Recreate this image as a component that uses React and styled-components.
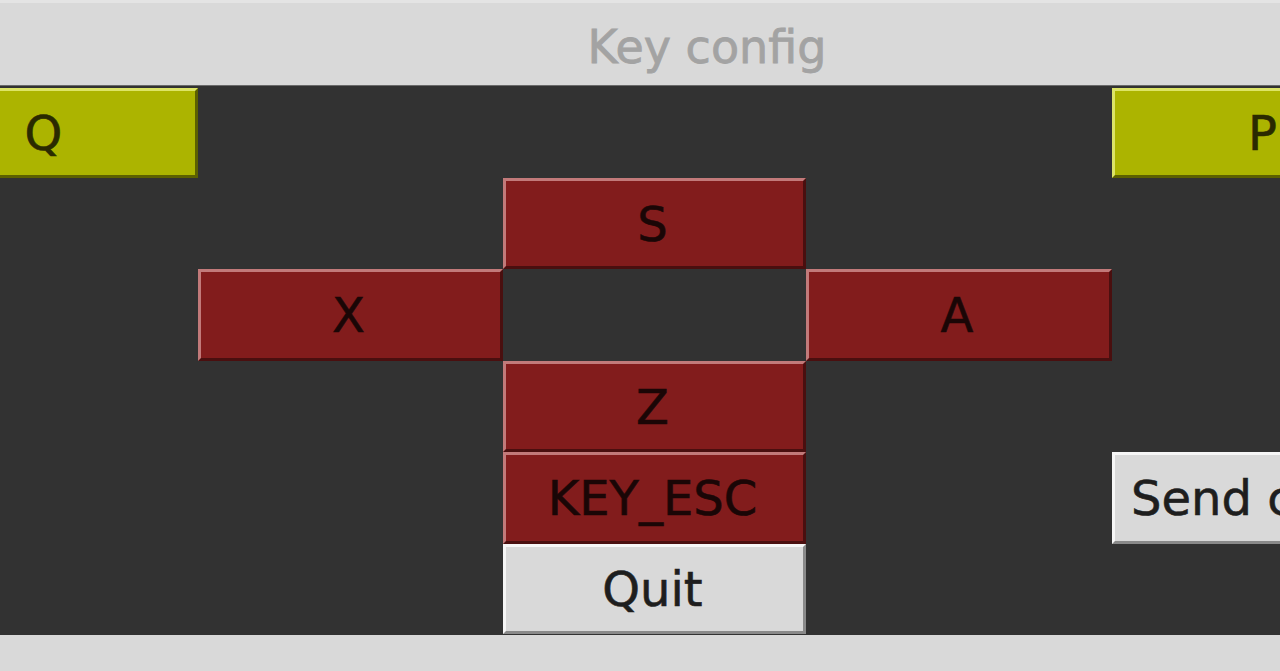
import React from "react";
import styled, { createGlobalStyle } from "styled-components";

const Global = createGlobalStyle`
	html, body {
		margin: 0;
		padding: 0;
		background: #d9d9d9;
		overflow: hidden;
	}
`;

const Window = styled.div`
	width: 1280px;
	height: 671px;
	display: flex;
	flex-direction: column;
	background: #d9d9d9;
	overflow: hidden;
	font-family: "DejaVu Sans", "Liberation Sans", sans-serif;
`;

const TitleBar = styled.div`
	height: 85px;
	display: flex;
	align-items: center;
	justify-content: center;
	padding: 6px 0 0 134px;
	box-sizing: border-box;
	color: #a3a3a3;
	font-size: 46px;
	-webkit-text-stroke: 0.8px #a3a3a3;
	border-top: 3px solid #e4e4e4;
`;

const Board = styled.div`
	height: 550px;
	background: #323232;
	border-top: 1px solid #6a6a6a;
	box-sizing: border-box;
	overflow: hidden;
`;

/* the window is cropped: the first column starts off-screen */
const Grid = styled.div`
	display: grid;
	grid-template-columns: 305px 305px 303px 306px 305px;
	grid-template-rows: 90px 91px 92px 91px 92px 90px;
	margin-left: -107px;
	padding-top: 2px;
`;

const palette = {
	yellow: { bg: "#acb400", light: "#dce466", dark: "#5c6000", fg: "#2a2a00" },
	red: { bg: "#821c1c", light: "#c27a7a", dark: "#4a0f0f", fg: "#1a0606" },
	grey: { bg: "#d9d9d9", light: "#f6f6f6", dark: "#8a8a8a", fg: "#1e1e1e" },
};

const Key = styled.button`
	grid-column: ${(p) => p.col};
	grid-row: ${(p) => p.row};
	margin: 0;
	padding: ${(p) => (p.left ? "0 0 0 16px" : "0 4px 0 0")};
	display: flex;
	align-items: center;
	justify-content: ${(p) => (p.left ? "flex-start" : "center")};
	white-space: nowrap;
	overflow: hidden;
	font-family: inherit;
	font-size: 48px;
	color: ${(p) => palette[p.tone].fg};
	-webkit-text-stroke: 0.6px ${(p) => palette[p.tone].fg};
	background: ${(p) => palette[p.tone].bg};
	border: 3px solid;
	border-color: ${(p) => palette[p.tone].light} ${(p) => palette[p.tone].dark}
		${(p) => palette[p.tone].dark} ${(p) => palette[p.tone].light};
	&:focus {
		outline: 0;
	}
`;

const keys = [
	{ label: "Q", col: 1, row: 1, tone: "yellow" },
	{ label: "P", col: 5, row: 1, tone: "yellow" },
	{ label: "S", col: 3, row: 2, tone: "red" },
	{ label: "X", col: 2, row: 3, tone: "red" },
	{ label: "A", col: 4, row: 3, tone: "red" },
	{ label: "Z", col: 3, row: 4, tone: "red" },
	{ label: "KEY_ESC", col: 3, row: 5, tone: "red" },
	{ label: "Send config", col: 5, row: 5, tone: "grey", left: true },
	{ label: "Quit", col: 3, row: 6, tone: "grey" },
];

export default function App() {
	return (
		<Window>
			<Global />
			<TitleBar>Key config</TitleBar>
			<Board>
				<Grid>
					{keys.map((k) => (
						<Key key={k.label} col={k.col} row={k.row} tone={k.tone} left={k.left}>
							{k.label}
						</Key>
					))}
				</Grid>
			</Board>
		</Window>
	);
}
